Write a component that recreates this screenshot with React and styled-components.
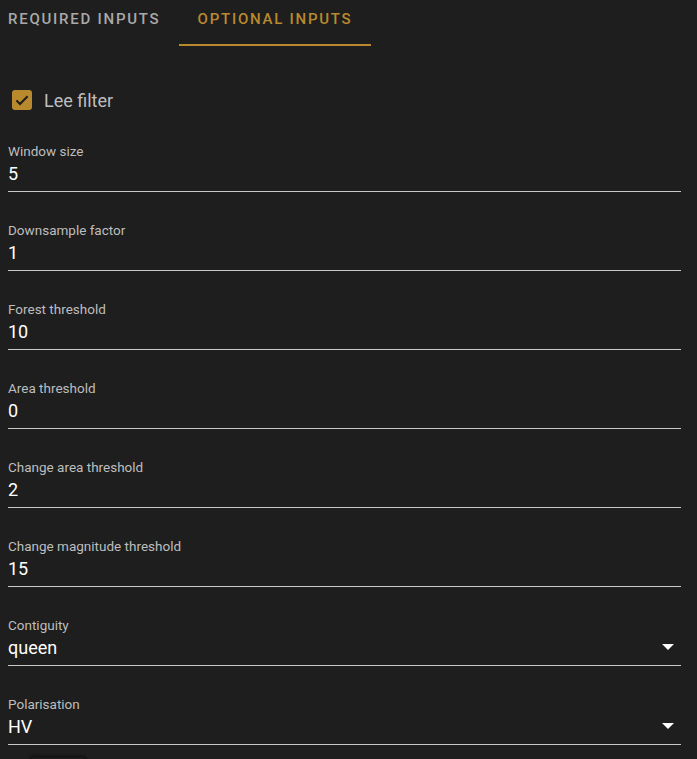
import React from "react";
import styled, { createGlobalStyle } from "styled-components";

const Global = createGlobalStyle`
  html, body { margin: 0; padding: 0; background: #1e1e1e; }
  body { font-family: Roboto, "Liberation Sans", sans-serif; overflow: hidden; }
`;

const Page = styled.div`
  width: 697px;
  height: 759px;
  background: #1e1e1e;
  overflow: hidden;
  position: relative;
`;

const Tabs = styled.div`
  display: flex;
  height: 46px;
`;

const Tab = styled.div`
  box-sizing: border-box;
  height: 46px;
  width: ${p => p.$first ? "179px" : "192px"};
  padding-left: ${p => p.$first ? "8px" : "0"};
  padding-bottom: 6px;
  display: flex;
  align-items: center;
  justify-content: ${p => p.$first ? "flex-start" : "center"};
  font-size: 15px;
  font-weight: 500;
  letter-spacing: 1.75px;
  text-transform: uppercase;
  white-space: nowrap;
  color: ${p => p.$active ? "#b98a2d" : "#a9a9a9"};
  border-bottom: 2px solid ${p => p.$active ? "#b98a2d" : "transparent"};
`;

const Form = styled.div`
  padding: 0 16px 0 8px;
  display: flex;
  flex-direction: column;
`;

const CheckRow = styled.label`
  display: flex;
  align-items: center;
  gap: 12px;
  margin-top: 44px;
  margin-left: 4px;
  height: 20px;
  margin-bottom: 32px;
`;

const Box = styled.span`
  width: 20px;
  height: 20px;
  border-radius: 3px;
  background: #b98a2d;
  display: flex;
  align-items: center;
  justify-content: center;
`;

const CheckLabel = styled.span`
  font-size: 18px;
  color: #bdbdbd;
`;

const Field = styled.div`
  display: flex;
  flex-direction: column;
  height: 79px;
`;

const Label = styled.div`
  font-size: 13.5px;
  line-height: 18px;
  height: 18px;
  color: #bdbdbd;
`;

const ValueRow = styled.div`
  box-sizing: border-box;
  display: flex;
  align-items: center;
  justify-content: space-between;
  height: 32px;
  padding-bottom: 5px;
  border-bottom: 1px solid #c9c9c9;
`;

const Value = styled.span`
  font-size: 18px;
  color: #ffffff;
`;

const Arrow = styled.span`
  width: 0;
  height: 0;
  border-left: 6px solid transparent;
  border-right: 6px solid transparent;
  border-top: 6px solid #ffffff;
  margin-right: 7px;
`;

const ButtonPeek = styled.div`
  position: absolute;
  left: 30px;
  top: 757px;
  width: 56px;
  height: 20px;
  background: #1a1a1a;
  border-radius: 4px;
  box-shadow: 0 -1px 3px rgba(0,0,0,0.6);
`;

const fields = [
  ["Window size", "5"],
  ["Downsample factor", "1"],
  ["Forest threshold", "10"],
  ["Area threshold", "0"],
  ["Change area threshold", "2"],
  ["Change magnitude threshold", "15"],
  ["Contiguity", "queen", true],
  ["Polarisation", "HV", true],
];

export default function App() {
  return (
    <Page>
      <Global />
      <Tabs>
        <Tab $first>Required inputs</Tab>
        <Tab $active>Optional inputs</Tab>
      </Tabs>
      <Form>
        <CheckRow>
          <Box>
            <svg width="18" height="18" viewBox="0 0 24 24">
              <path d="M4.5 12.5l4.8 4.8L19.5 7" fill="none" stroke="#1e1e1e" strokeWidth="2.8" />
            </svg>
          </Box>
          <CheckLabel>Lee filter</CheckLabel>
        </CheckRow>
        {fields.map(([l, v, sel], i) => (
          <Field key={i}>
            <Label>{l}</Label>
            <ValueRow>
              <Value>{v}</Value>
              {sel && <Arrow />}
            </ValueRow>
          </Field>
        ))}
      </Form>
      <ButtonPeek />
    </Page>
  );
}
